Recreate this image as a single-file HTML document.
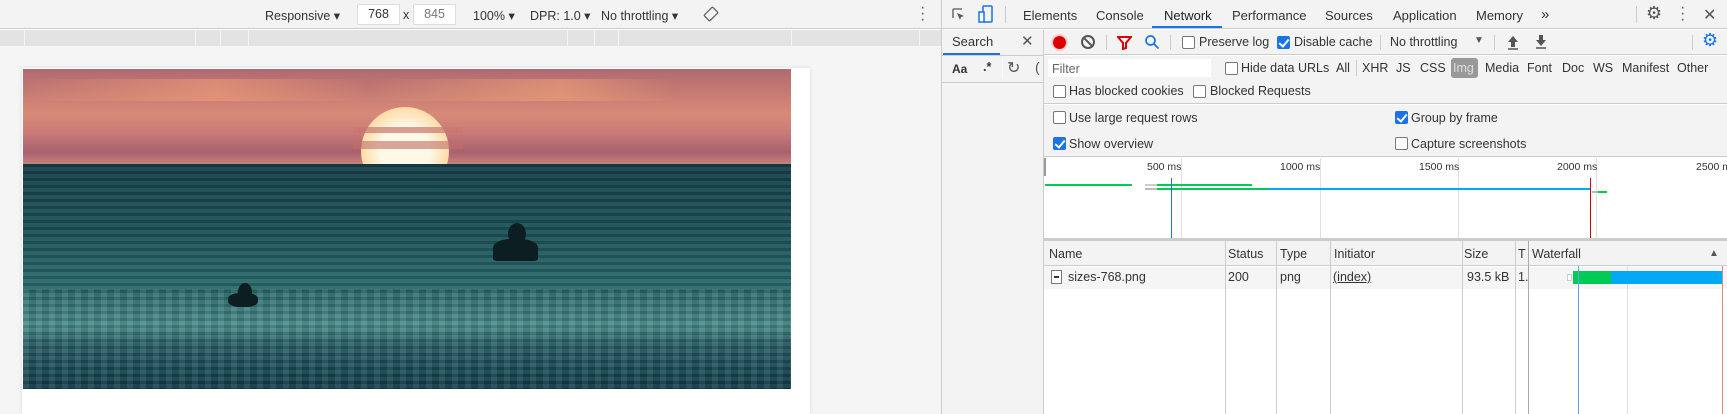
<!DOCTYPE html>
<html><head><meta charset="utf-8"><style>
*{box-sizing:border-box;margin:0;padding:0}
body{width:1727px;height:414px;overflow:hidden;font-family:"Liberation Sans",sans-serif;font-size:12.5px;color:#333;background:#fff;position:relative}
.a{position:absolute;white-space:nowrap}
.cb{position:absolute;width:13px;height:13px;border:1px solid #777;border-radius:2px;background:#fff}
.cb.on{background:#1a73e8;border-color:#1a73e8}
.cb.on:after{content:"";position:absolute;left:3px;top:0px;width:4px;height:8px;border:solid #fff;border-width:0 2px 2px 0;transform:rotate(40deg)}
.vl{position:absolute;width:1px;background:#ccc}
.hl{position:absolute;height:1px;background:#ccc}
</style></head><body>
<!-- LEFT -->
<div class="a" style="left:0;top:0;width:942px;height:29px;background:#f3f3f3;border-bottom:1px solid #ccc"></div>
<div class="a" style="left:265px;top:8px">Responsive ▾</div>
<div class="a" style="left:357px;top:4px;width:43px;height:21px;background:#fff;border:1px solid #ddd;text-align:center;line-height:19px">768</div>
<div class="a" style="left:403px;top:8px">x</div>
<div class="a" style="left:413px;top:4px;width:43px;height:21px;background:#fff;border:1px solid #ddd;text-align:center;line-height:19px;color:#777">845</div>
<div class="a" style="left:473px;top:8px">100% ▾</div>
<div class="a" style="left:530px;top:8px">DPR: 1.0 ▾</div>
<div class="a" style="left:601px;top:8px">No throttling ▾</div>
<svg class="a" style="left:703px;top:6px" width="16" height="16" viewBox="0 0 16 16"><rect x="4" y="2" width="8" height="12" rx="1" transform="rotate(45 8 8)" fill="none" stroke="#666" stroke-width="1.3"/></svg>
<div class="a" style="left:920px;top:5px;font-size:16px;line-height:6px;color:#555">·<br>·<br>·</div>
<div class="a" style="left:0;top:30px;width:942px;height:17px;background:#e3e3e3"></div>
<div class="a" style="left:0;top:46px;width:942px;height:368px;background:#f5f5f5"></div>
<div class="vl" style="left:24px;top:30px;height:16px;background:#f5f5f5"></div>
<div class="vl" style="left:195px;top:30px;height:16px;background:#f5f5f5"></div>
<div class="vl" style="left:220px;top:30px;height:16px;background:#f5f5f5"></div>
<div class="vl" style="left:248px;top:30px;height:16px;background:#f5f5f5"></div>
<div class="vl" style="left:567px;top:30px;height:16px;background:#f5f5f5"></div>
<div class="vl" style="left:594px;top:30px;height:16px;background:#f5f5f5"></div>
<div class="vl" style="left:618px;top:30px;height:16px;background:#f5f5f5"></div>
<div class="vl" style="left:791px;top:30px;height:16px;background:#f5f5f5"></div>
<div class="vl" style="left:919px;top:30px;height:16px;background:#f5f5f5"></div>
<div class="a" style="left:22px;top:68px;width:788px;height:346px;background:#fff;box-shadow:0 0 4px rgba(0,0,0,.1)"></div>
<div class="a" style="left:23px;top:69px;width:768px;height:320px;overflow:hidden;background:linear-gradient(180deg,#b06a70 0%,#d88a78 14%,#c97a78 20%,#a96070 26%,#c9857a 30%,#16404a 30.5%)">
<div class="a" style="left:0;top:10px;width:768px;height:22px;background:linear-gradient(90deg,rgba(0,0,0,0),rgba(245,160,120,.55) 25%,rgba(0,0,0,0) 45%,rgba(245,170,120,.5) 70%,rgba(0,0,0,0) 85%)"></div>
<div class="a" style="left:338px;top:38px;width:88px;height:88px;border-radius:50%;background:radial-gradient(circle,#fff8e6 40%,#ffdba8 70%,#f5b98a 100%)"></div>
<div class="a" style="left:330px;top:58px;width:110px;height:6px;background:rgba(200,120,110,.7)"></div>
<div class="a" style="left:330px;top:72px;width:110px;height:8px;background:rgba(190,110,105,.6)"></div>
<div class="a" style="left:0;top:95px;width:768px;height:225px;background:repeating-linear-gradient(180deg,rgba(0,0,0,.12) 0 3px,rgba(255,255,255,.05) 3px 7px),linear-gradient(180deg,#16404a 0%,#1c5258 30%,#2b6a6c 55%,#4a8e8c 72%,#2a6068 80%,#1a4c58 92%,#143e4a 100%)"></div>
<div class="a" style="left:0;top:220px;width:768px;height:100px;background:repeating-linear-gradient(90deg,rgba(255,255,255,.06) 0 6px,rgba(0,0,0,.08) 6px 13px)"></div>
<div class="a" style="left:485px;top:154px;width:18px;height:22px;border-radius:50%;background:#0c1e22"></div>
<div class="a" style="left:470px;top:170px;width:45px;height:22px;border-radius:40% 40% 10% 10%;background:#0c1e22"></div>
<div class="a" style="left:215px;top:214px;width:14px;height:18px;border-radius:50%;background:#0c1e22"></div>
<div class="a" style="left:205px;top:224px;width:30px;height:14px;border-radius:40%;background:#0c1e22"></div>
</div>
<!-- DEVTOOLS -->
<div class="a" style="left:941px;top:0;width:1px;height:414px;background:#ccc"></div>
<div class="a" style="left:942px;top:0;width:785px;height:29px;background:#f3f3f3;border-bottom:1px solid #ccc"></div>
<svg class="a" style="left:951px;top:7px" width="16" height="16" viewBox="0 0 16 16"><path d="M2 2h9M2 2v9" stroke="#555" fill="none" stroke-width="1.3"/><path d="M6 6l7 3-3 1-1 3z" fill="#555"/></svg>
<svg class="a" style="left:978px;top:5px" width="16" height="19" viewBox="0 0 16 19"><rect x="5" y="1" width="9" height="16" rx="1" fill="none" stroke="#1a73e8" stroke-width="1.5"/><rect x="1" y="7" width="5" height="10" fill="#fff" stroke="#1a73e8" stroke-width="1.5"/></svg>
<div class="vl" style="left:1005px;top:6px;height:17px"></div>
<div class="a" style="left:1023px;top:8px;font-size:13px">Elements</div>
<div class="a" style="left:1096px;top:8px;font-size:13px">Console</div>
<div class="a" style="left:1164px;top:8px;font-size:13px;color:#222">Network</div>
<div class="a" style="left:1152px;top:26px;width:70px;height:2px;background:#1a73e8"></div>
<div class="a" style="left:1232px;top:8px;font-size:13px">Performance</div>
<div class="a" style="left:1325px;top:8px;font-size:13px">Sources</div>
<div class="a" style="left:1393px;top:8px;font-size:13px">Application</div>
<div class="a" style="left:1476px;top:8px;font-size:13px">Memory</div>
<div class="a" style="left:1541px;top:6px;font-size:15px">»</div>
<div class="vl" style="left:1636px;top:6px;height:17px"></div>
<div class="a" style="left:1646px;top:3px;font-size:18px;color:#555">⚙</div>
<div class="a" style="left:1680px;top:5px;font-size:16px;line-height:6px;color:#555">·<br>·<br>·</div>
<div class="a" style="left:1703px;top:5px;font-size:16px;color:#555">✕</div>
<!-- search panel -->
<div class="a" style="left:942px;top:30px;width:102px;height:384px;background:#f3f3f3"></div>
<div class="a" style="left:1043px;top:30px;width:1px;height:384px;background:#ccc"></div>
<div class="a" style="left:952px;top:34px;font-size:13px">Search</div>
<div class="a" style="left:1021px;top:32px;font-size:15px;color:#555">✕</div>
<div class="a" style="left:943px;top:53px;width:57px;height:2px;background:#1a73e8"></div>
<div class="hl" style="left:942px;top:55px;width:102px"></div>
<div class="a" style="left:952px;top:62px;font-weight:bold;font-size:12px">Aa</div>
<div class="a" style="left:983px;top:60px;font-weight:bold">.*</div>
<div class="a" style="left:1002px;top:58px;width:1px;height:20px;background:#fff"></div>
<div class="a" style="left:1007px;top:58px;font-size:16px;color:#555">↻</div>
<div class="a" style="left:1035px;top:59px;font-size:14px;color:#555">(</div>
<div class="hl" style="left:942px;top:82px;width:102px"></div>
<!-- network toolbar -->
<div class="a" style="left:1044px;top:30px;width:683px;height:25px;background:#f3f3f3;border-bottom:1px solid #ccc"></div>
<div class="a" style="left:1053px;top:36px;width:13px;height:13px;border-radius:50%;background:#d00;box-shadow:0 0 0 2px #f8d0d0"></div>
<div class="a" style="left:1081px;top:35px;width:14px;height:14px;border-radius:50%;border:2px solid #555"></div>
<div class="a" style="left:1087px;top:35px;width:2px;height:14px;background:#555;transform:rotate(-45deg)"></div>
<div class="vl" style="left:1106px;top:35px;height:15px"></div>
<svg class="a" style="left:1117px;top:35px" width="15" height="15" viewBox="0 0 15 15"><path d="M1 2h13l-5 6v5l-3 1v-6z" fill="none" stroke="#d00" stroke-width="2"/></svg>
<svg class="a" style="left:1144px;top:34px" width="16" height="16" viewBox="0 0 16 16"><circle cx="6.5" cy="6.5" r="4.5" fill="none" stroke="#1a73e8" stroke-width="1.7"/><path d="M10 10l4.5 4.5" stroke="#1a73e8" stroke-width="1.8"/></svg>
<div class="vl" style="left:1170px;top:35px;height:15px"></div>
<div class="cb" style="left:1182px;top:36px"></div><div class="a" style="left:1199px;top:35px">Preserve log</div>
<div class="cb on" style="left:1277px;top:36px"></div><div class="a" style="left:1294px;top:35px">Disable cache</div>
<div class="vl" style="left:1380px;top:35px;height:15px"></div>
<div class="a" style="left:1390px;top:35px">No throttling</div>
<div class="a" style="left:1474px;top:35px;font-size:10px;color:#555">▼</div>
<div class="vl" style="left:1494px;top:35px;height:15px"></div>
<svg class="a" style="left:1506px;top:34px" width="14" height="16" viewBox="0 0 14 16"><path d="M7 2l-5 6h3v5h4V8h3z" fill="#555"/><path d="M2 15h10" stroke="#555" stroke-width="1.5"/></svg>
<svg class="a" style="left:1534px;top:33px" width="14" height="16" viewBox="0 0 14 16"><path d="M7 13l-5-6h3V2h4v5h3z" fill="#555"/><path d="M2 15h10" stroke="#555" stroke-width="1.5"/></svg>
<div class="vl" style="left:1692px;top:35px;height:15px"></div>
<div class="a" style="left:1702px;top:30px;font-size:18px;color:#1a73e8">⚙</div>
<!-- filter rows -->
<div class="a" style="left:1044px;top:56px;width:683px;height:48px;background:#f3f3f3;border-bottom:1px solid #ccc"></div>
<div class="a" style="left:1048px;top:59px;width:163px;height:18px;background:#fff;padding:3px 4px;color:#666">Filter</div>
<div class="cb" style="left:1225px;top:62px"></div><div class="a" style="left:1241px;top:61px">Hide data URLs</div>
<div class="a" style="left:1336px;top:61px">All</div>
<div class="vl" style="left:1356px;top:60px;height:16px"></div>
<div class="a" style="left:1362px;top:61px">XHR</div>
<div class="a" style="left:1396px;top:61px">JS</div>
<div class="a" style="left:1420px;top:61px">CSS</div>
<div class="a" style="left:1451px;top:58px;width:27px;height:20px;background:#999;border-radius:3px;color:#ddd;padding:3px 2px">Img</div>
<div class="a" style="left:1485px;top:61px">Media</div>
<div class="a" style="left:1527px;top:61px">Font</div>
<div class="a" style="left:1562px;top:61px">Doc</div>
<div class="a" style="left:1593px;top:61px">WS</div>
<div class="a" style="left:1622px;top:61px">Manifest</div>
<div class="a" style="left:1677px;top:61px">Other</div>
<div class="cb" style="left:1053px;top:85px"></div><div class="a" style="left:1069px;top:84px">Has blocked cookies</div>
<div class="cb" style="left:1193px;top:85px"></div><div class="a" style="left:1210px;top:84px">Blocked Requests</div>
<!-- settings -->
<div class="a" style="left:1044px;top:105px;width:683px;height:52px;background:#f3f3f3;border-bottom:1px solid #ccc"></div>
<div class="cb" style="left:1053px;top:111px"></div><div class="a" style="left:1069px;top:111px">Use large request rows</div>
<div class="cb on" style="left:1395px;top:111px"></div><div class="a" style="left:1411px;top:111px">Group by frame</div>
<div class="cb on" style="left:1053px;top:137px"></div><div class="a" style="left:1069px;top:137px">Show overview</div>
<div class="cb" style="left:1395px;top:137px"></div><div class="a" style="left:1411px;top:137px">Capture screenshots</div>
<!-- overview -->
<div class="a" style="left:1044px;top:158px;width:2px;height:18px;background:#999"></div>
<div class="vl" style="left:1181px;top:158px;height:80px;background:#e0e0e0"></div>
<div class="vl" style="left:1320px;top:158px;height:80px;background:#e0e0e0"></div>
<div class="vl" style="left:1458px;top:158px;height:80px;background:#e0e0e0"></div>
<div class="vl" style="left:1596px;top:158px;height:80px;background:#e0e0e0"></div>
<div class="a" style="left:1147px;top:161px;font-size:10.5px">500 ms</div>
<div class="a" style="left:1280px;top:161px;font-size:10.5px">1000 ms</div>
<div class="a" style="left:1419px;top:161px;font-size:10.5px">1500 ms</div>
<div class="a" style="left:1557px;top:161px;font-size:10.5px">2000 ms</div>
<div class="a" style="left:1696px;top:161px;font-size:10.5px">2500 ms</div>
<div class="a" style="left:1045px;top:184px;width:87px;height:2px;background:#0c5"></div>
<div class="a" style="left:1145px;top:184px;width:12px;height:2px;background:#ccc"></div>
<div class="a" style="left:1157px;top:184px;width:95px;height:2px;background:#0c5"></div>
<div class="a" style="left:1145px;top:188px;width:12px;height:2px;background:#bbb"></div>
<div class="a" style="left:1157px;top:188px;width:111px;height:2px;background:#0c5"></div>
<div class="a" style="left:1268px;top:188px;width:322px;height:2px;background:#03a9f4"></div>
<div class="a" style="left:1592px;top:191px;width:6px;height:2px;background:#bbb"></div>
<div class="a" style="left:1598px;top:191px;width:9px;height:2px;background:#0c5"></div>
<div class="a" style="left:1171px;top:178px;width:1px;height:60px;background:#1a73e8"></div>
<div class="a" style="left:1590px;top:178px;width:1px;height:60px;background:#c00"></div>
<!-- table -->
<div class="a" style="left:1044px;top:238px;width:683px;height:3px;background:#ccc"></div>
<div class="a" style="left:1044px;top:241px;width:683px;height:25px;background:#f3f3f3;border-bottom:1px solid #ccc"></div>
<div class="a" style="left:1044px;top:267px;width:683px;height:22px;background:#f5f5f5"></div>
<div class="vl" style="left:1225px;top:241px;height:173px"></div>
<div class="vl" style="left:1276px;top:241px;height:173px"></div>
<div class="vl" style="left:1330px;top:241px;height:173px"></div>
<div class="vl" style="left:1462px;top:241px;height:173px"></div>
<div class="vl" style="left:1515px;top:241px;height:173px"></div>
<div class="vl" style="left:1528px;top:241px;height:173px;background:#aaa"></div>
<div class="a" style="left:1049px;top:247px">Name</div>
<div class="a" style="left:1228px;top:247px">Status</div>
<div class="a" style="left:1280px;top:247px">Type</div>
<div class="a" style="left:1334px;top:247px">Initiator</div>
<div class="a" style="left:1464px;top:247px">Size</div>
<div class="a" style="left:1518px;top:247px">T</div>
<div class="a" style="left:1532px;top:247px">Waterfall</div>
<div class="a" style="left:1709px;top:248px;font-size:10px;color:#555">▲</div>
<div class="a" style="left:1051px;top:270px;width:11px;height:14px;border:1px solid #777;background:#fff"><div style="margin:5px 2px;height:2px;background:#333"></div></div>
<div class="a" style="left:1068px;top:270px">sizes-768.png</div>
<div class="a" style="left:1228px;top:270px">200</div>
<div class="a" style="left:1280px;top:270px">png</div>
<div class="a" style="left:1333px;top:270px;text-decoration:underline">(index)</div>
<div class="a" style="left:1467px;top:270px">93.5 kB</div>
<div class="a" style="left:1518px;top:270px">1.</div>
<div class="vl" style="left:1627px;top:267px;height:147px;background:#e0e0e0"></div>
<div class="a" style="left:1567px;top:274px;width:5px;height:7px;border:1px solid #ccc;background:#fff"></div>
<div class="a" style="left:1573px;top:271px;width:38px;height:13px;background:#0c5"></div>
<div class="a" style="left:1611px;top:271px;width:111px;height:13px;background:#03a9f4"></div>
<div class="a" style="left:1578px;top:266px;width:1px;height:148px;background:#6aa0e8"></div>
<div class="a" style="left:1722px;top:266px;width:1px;height:148px;background:#d88"></div>
</body></html>
